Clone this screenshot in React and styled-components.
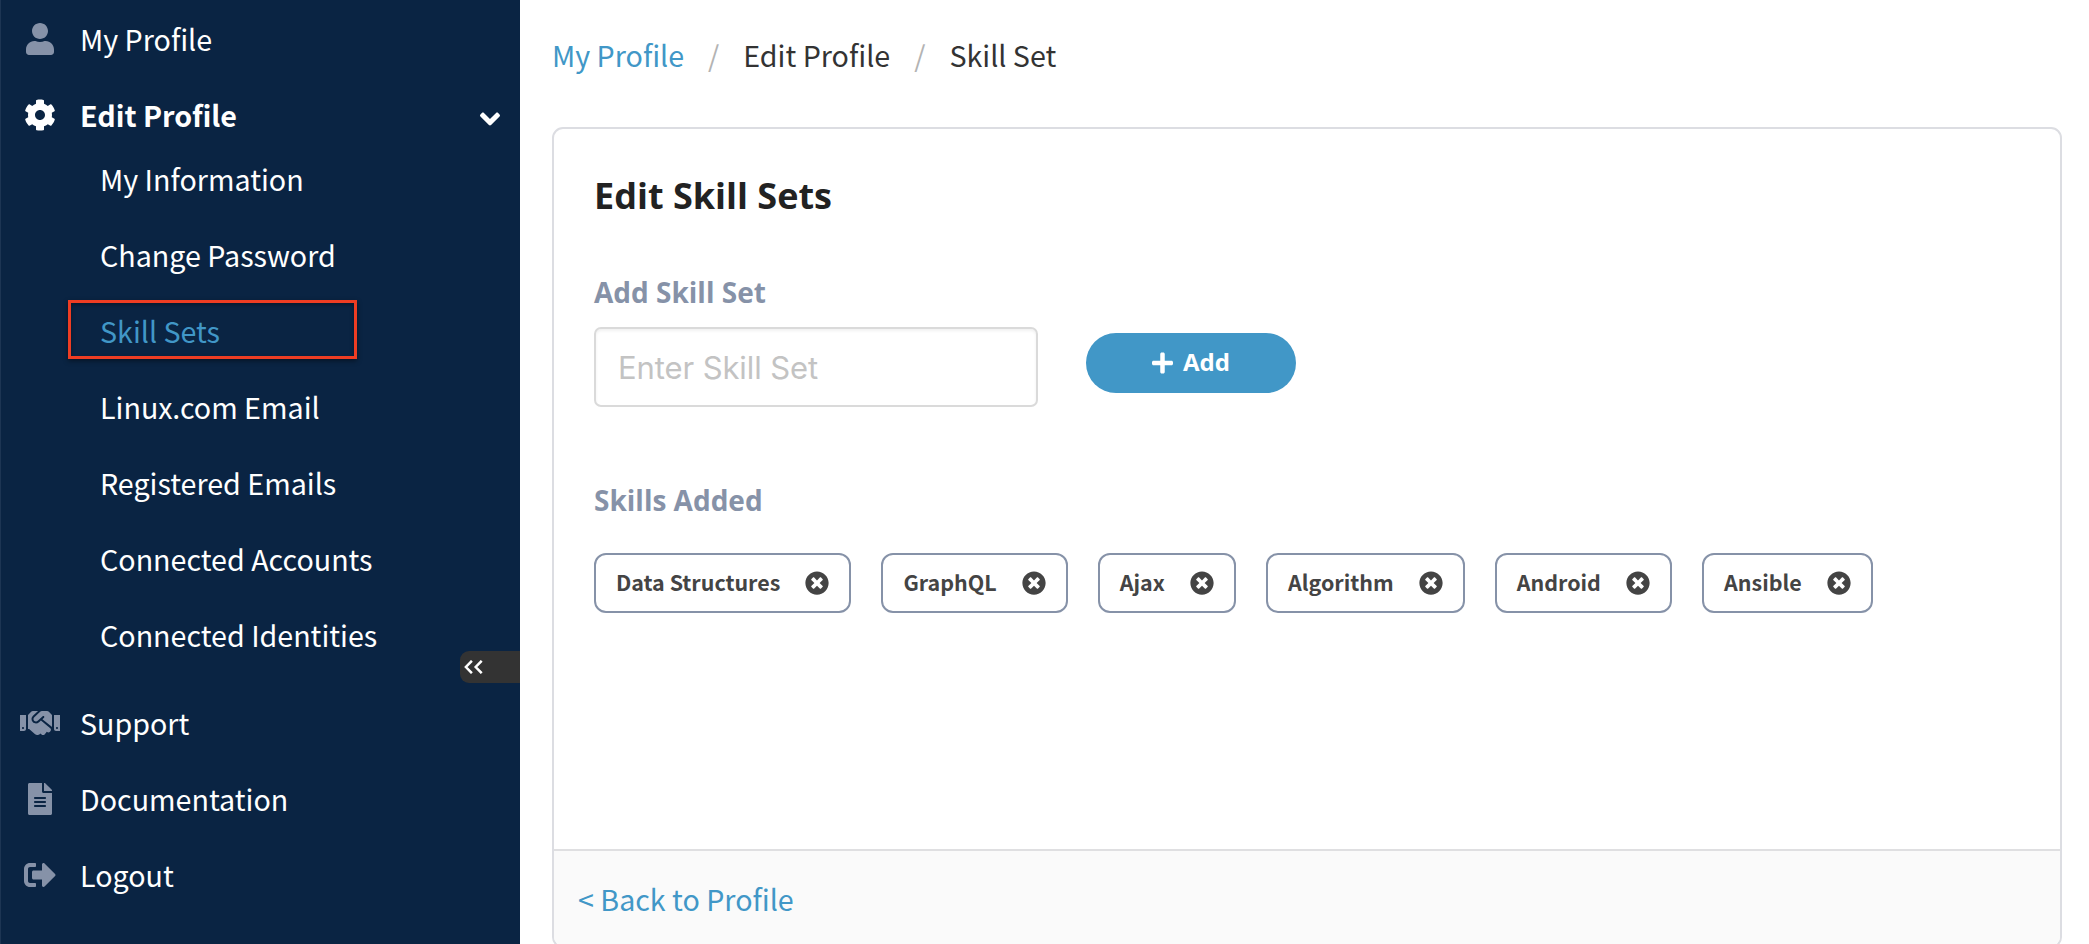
import React from "react";
import styled, { createGlobalStyle } from "styled-components";
import {
  FaAngleDown,
  FaCog,
  FaFileAlt,
  FaHandshake,
  FaPlus,
  FaSignOutAlt,
  FaTimesCircle,
  FaUser,
} from "react-icons/fa";

const GlobalStyle = createGlobalStyle`
  *, *::before, *::after { box-sizing: border-box; }
  body {
    margin: 0;
    background: #fff;
    font-family: "Noto Sans CJK SC", "Noto Sans", sans-serif;
    font-size: 28.65px;
    color: #333;
    overflow: hidden;
  }
  a { color: inherit; text-decoration: none; }
`;

const headingFont = '"Open Sans", "Noto Sans", sans-serif';

const Page = styled.div`
  display: flex;
  height: 944px;
  overflow: hidden;
`;

const Sidebar = styled.nav`
  position: relative;
  flex: 0 0 520px;
  padding-top: 1px;
  background: #0a2443;
  border-left: 1px solid #1d3553;
  color: #fff;
`;

const NavRow = styled.a`
  display: flex;
  align-items: center;
  gap: 20px;
  height: 76px;
  padding: 0 20px 0 19px;
  line-height: 76px;
  white-space: nowrap;
  font-weight: ${(p) => (p.$active ? 700 : 400)};
`;

const NavIcon = styled.span`
  display: flex;
  flex: 0 0 40px;
  color: ${(p) => (p.$active ? "#fff" : "#8692a8")};
  svg {
    width: 40px;
    height: 32px;
  }
`;

const NavLabel = styled.span`
  flex: 1;
`;

const Caret = styled(FaAngleDown)`
  width: 20px;
  height: 32px;
  margin-top: 7px;
`;

const SubMenu = styled.div`
  margin: -12px 0 12px;
`;

const SubItem = styled.a`
  position: relative;
  display: block;
  height: 76px;
  padding-left: 99px;
  line-height: 76px;
  white-space: nowrap;
  color: ${(p) => (p.$selected ? "#4197c7" : "#fff")};
`;

const Highlight = styled.span`
  position: absolute;
  top: 7px;
  left: 67px;
  width: 289px;
  height: 59px;
  border: 3px solid #ee3d23;
  box-shadow: 0 2px 5px rgba(0, 0, 0, 0.45), inset 0 2px 4px rgba(0, 0, 0, 0.35);
`;

const CollapseTab = styled.button`
  position: absolute;
  top: 651px;
  right: 0;
  display: flex;
  align-items: center;
  width: 60px;
  height: 32px;
  padding: 0 0 0 4px;
  border: 0;
  border-radius: 9px 0 0 9px;
  background: #333;
  color: #fff;
`;

const Main = styled.main`
  flex: 1;
  padding: 0 27px 0 32px;
`;

const Breadcrumb = styled.div`
  display: flex;
  gap: 24px;
  height: 127px;
  padding-top: 32px;
  line-height: 45px;
`;

const Crumb = styled.span`
  color: ${(p) => (p.$link ? "#4197c7" : "#333")};
`;

const Slash = styled.span`
  color: #b3b3b3;
`;

const Card = styled.section`
  border: 2px solid #dcdde2;
  border-radius: 11px;
  overflow: hidden;
`;

const CardBody = styled.div`
  height: 720px;
  padding: 45px 40px 0;
`;

const Title = styled.h1`
  margin: 0 0 54px;
  font: 700 36px/44px ${headingFont};
  color: #222;
`;

const FieldLabel = styled.h2`
  margin: 0;
  font: 700 28px/40px ${headingFont};
  color: #8692a8;
`;

const AddForm = styled.div`
  display: flex;
  align-items: flex-start;
  gap: 48px;
  margin: 15px 0 73px;
`;

const SkillInput = styled.input`
  width: 444px;
  height: 80px;
  padding: 0 22px;
  border: 2px solid #dadada;
  border-radius: 7px;
  background: #fff;
  box-shadow: inset 0 2px 3px rgba(0, 0, 0, 0.06);
  font: 400 31px/40px Inter, sans-serif;
  letter-spacing: -0.1px;
  &::placeholder {
    color: #c3c3c3;
    opacity: 1;
  }
`;

const AddButton = styled.button`
  display: flex;
  align-items: center;
  justify-content: center;
  gap: 10px;
  width: 210px;
  height: 60px;
  margin-top: 6px;
  padding: 0;
  border: 0;
  border-radius: 30px;
  background: #4197c7;
  color: #fff;
  font: 700 24px/30px ${headingFont};
  svg {
    width: 21px;
    height: 24px;
  }
  span {
    padding-bottom: 2px;
  }
`;

const Chips = styled.div`
  display: flex;
  gap: 30px;
  margin-top: 33px;
`;

const Chip = styled.div`
  display: flex;
  align-items: center;
  gap: 25.2px;
  height: 60px;
  padding: 0 20px;
  border: 2px solid #8692a8;
  border-radius: 12px;
  font-size: 21.45px;
  font-weight: 700;
  line-height: 32px;
  color: #444;
  svg {
    width: 24px;
    height: 24px;
  }
`;

const ChipLabel = styled.span`
  padding-bottom: 3px;
`;

const CardFooter = styled.footer`
  height: 97px;
  padding-left: 24px;
  border-top: 2px solid #dfdfe1;
  background: #fafafa;
  line-height: 95px;
  color: #4197c7;
`;

const subItems = [
  "My Information",
  "Change Password",
  "Skill Sets",
  "Linux.com Email",
  "Registered Emails",
  "Connected Accounts",
  "Connected Identities",
];

const skills = ["Data Structures", "GraphQL", "Ajax", "Algorithm", "Android", "Ansible"];

function NavItem({ icon: Icon, label, active, children }) {
  return (
    <NavRow $active={active}>
      <NavIcon $active={active}>
        <Icon />
      </NavIcon>
      <NavLabel>{label}</NavLabel>
      {children}
    </NavRow>
  );
}

export default function App() {
  return (
    <>
      <GlobalStyle />
      <Page>
        <Sidebar>
          <NavItem icon={FaUser} label="My Profile" />
          <NavItem icon={FaCog} label="Edit Profile" active>
            <Caret />
          </NavItem>
          <SubMenu>
            {subItems.map((label) => {
              const selected = label === "Skill Sets";
              return (
                <SubItem key={label} $selected={selected}>
                  {label}
                  {selected && <Highlight />}
                </SubItem>
              );
            })}
          </SubMenu>
          <NavItem icon={FaHandshake} label="Support" />
          <NavItem icon={FaFileAlt} label="Documentation" />
          <NavItem icon={FaSignOutAlt} label="Logout" />
          <CollapseTab aria-label="Collapse sidebar">
            <svg width="19" height="14" viewBox="0 0 19 14" fill="none" stroke="currentColor" strokeWidth="2.5">
              <path d="M7.9 0.8 1.9 7l6 6.2M17.7 0.8 11.7 7l6 6.2" />
            </svg>
          </CollapseTab>
        </Sidebar>
        <Main>
          <Breadcrumb>
            <Crumb $link>My Profile</Crumb>
            <Slash>/</Slash>
            <Crumb>Edit Profile</Crumb>
            <Slash>/</Slash>
            <Crumb>Skill Set</Crumb>
          </Breadcrumb>
          <Card>
            <CardBody>
              <Title>Edit Skill Sets</Title>
              <FieldLabel>Add Skill Set</FieldLabel>
              <AddForm>
                <SkillInput placeholder="Enter Skill Set" />
                <AddButton>
                  <FaPlus />
                  <span>Add</span>
                </AddButton>
              </AddForm>
              <FieldLabel>Skills Added</FieldLabel>
              <Chips>
                {skills.map((skill) => (
                  <Chip key={skill}>
                    <ChipLabel>{skill}</ChipLabel>
                    <FaTimesCircle />
                  </Chip>
                ))}
              </Chips>
            </CardBody>
            <CardFooter>
              <a>&lt; Back to Profile</a>
            </CardFooter>
          </Card>
        </Main>
      </Page>
    </>
  );
}
